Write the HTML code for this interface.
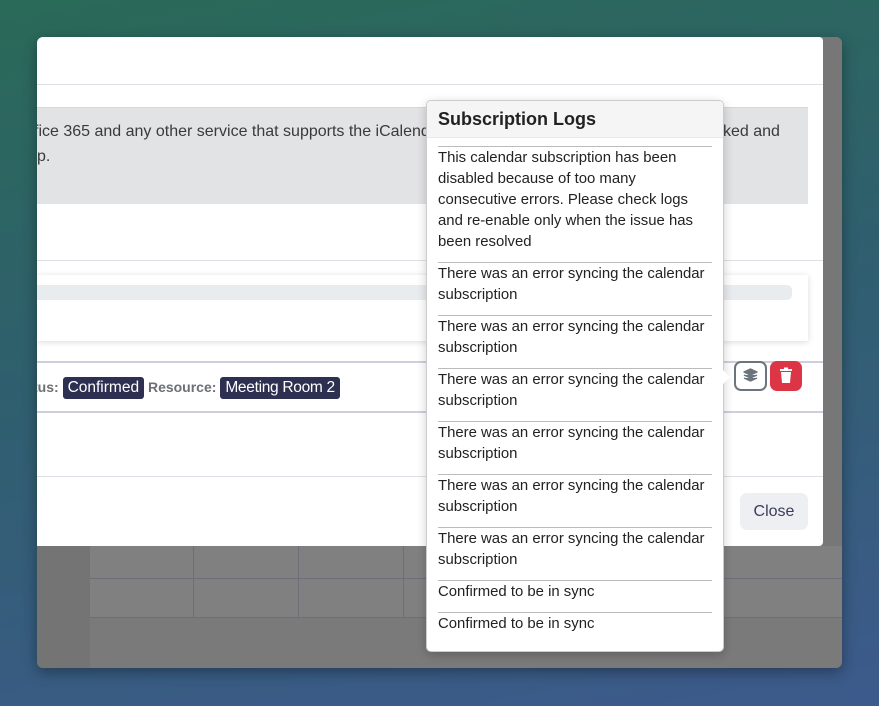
<!DOCTYPE html>
<html><head><style>
*{margin:0;padding:0;box-sizing:border-box}
body{width:879px;height:706px;overflow:hidden;font-family:"Liberation Sans",sans-serif;background:linear-gradient(170deg,#2a6a58 0%,#2f5f6e 45%,#3d5a8c 100%);position:relative}
.a{position:absolute}
.frame{left:37px;top:37px;width:805px;height:631px;background:#7a7a7a;border-radius:6px;overflow:hidden;box-shadow:0 4px 14px rgba(0,0,0,.35)}
.modal{left:0;top:0;width:786px;height:509px;background:#fff;border-radius:0 4px 4px 0}
.hl{height:1px;background:#dee0e6}
.t{font-size:16px;color:#3a3a3a;line-height:25px;white-space:nowrap}
.pop{left:426px;top:100px;width:298px;height:552px;background:#fff;border:1px solid #ccc;border-radius:5px;box-shadow:0 3px 10px rgba(0,0,0,.2)}
.ph{height:37px;background:#f5f5f5;font-weight:bold;font-size:18px;color:#222;padding:8px 11px;border-bottom:1px solid #e8e8e8;border-radius:5px 5px 0 0}
.it{margin:0 11px;border-top:1px solid #bbb;font-size:14.9px;line-height:21px;color:#222;padding-top:1px;padding-bottom:9px;white-space:nowrap}
.badge{background:#2e3052;color:#fff;border-radius:3px;padding:0 5px;font-size:15.5px;line-height:22px;display:inline-block}
</style></head><body>
<div class="a frame">
  <div class="a" style="left:0;top:509px;width:53px;height:122px;background:#747474"></div>
  <div class="a" style="left:53px;top:509px;width:752px;height:72px;background:#808080"></div>
  <div class="a" style="left:53px;top:541px;width:752px;height:1px;background:#6e6e78"></div>
  <div class="a" style="left:53px;top:580px;width:752px;height:1px;background:#6e6e78"></div>
  <div class="a" style="left:156px;top:509px;width:1px;height:72px;background:#6e6e78"></div>
  <div class="a" style="left:261px;top:509px;width:1px;height:72px;background:#6e6e78"></div>
  <div class="a" style="left:366px;top:509px;width:1px;height:72px;background:#6e6e78"></div>
  <div class="a" style="left:786px;top:0;width:19px;height:509px;background:#777"></div>
  <div class="a modal">
    <div class="a hl" style="left:0;top:47px;width:786px"></div>
    <div class="a" style="left:0;top:70px;width:771px;height:97px;background:#e2e3e5;border-top:1px solid #d6d7da"></div>
    <div class="a t" style="left:-3px;top:82px">fice 365 and any other service that supports the iCalendar format. Events</div>
    <div class="a t" style="left:686px;top:82px">ked and</div>
    <div class="a t" style="left:0;top:107px">p.</div>
    <div class="a hl" style="left:0;top:223px;width:786px"></div>
    <div class="a" style="left:0;top:238px;width:771px;height:66px;background:#fff;box-shadow:0 1px 6px rgba(0,0,0,.15)"></div>
    <div class="a" style="left:0;top:248px;width:755px;height:15px;background:#e9ecef;border-radius:0 5px 5px 0"></div>
    <div class="a" style="left:0;top:324px;width:786px;height:2px;background:#cdd0dc"></div>
    <div class="a" style="left:0;top:374px;width:786px;height:2px;background:#cdd0dc"></div>
    <div class="a" style="left:-4px;top:339px;font-size:14px;color:#6c6f73;font-weight:bold;white-space:nowrap;line-height:22px">tus: <span class="badge" style="font-weight:normal">Confirmed</span> Resource: <span class="badge" style="font-weight:normal;letter-spacing:-0.3px">Meeting Room 2</span></div>
    <div class="a" style="left:697px;top:324px;width:33px;height:30px;border:2px solid #6c757d;border-radius:7px"><svg width="29" height="26" viewBox="0 0 29 26"><path d="M14.5 6 L21 9 L14.5 12 L8 9Z M8 12 L14.5 15 L21 12 M8 15 L14.5 18 L21 15" fill="#6c757d" stroke="#6c757d" stroke-width="1.5" stroke-linejoin="round"/></svg></div>
    <div class="a" style="left:733px;top:324px;width:32px;height:30px;background:#dc3545;border-radius:7px"><svg width="32" height="30" viewBox="0 0 32 30"><rect x="10" y="8" width="12" height="2" fill="#fff"/><rect x="14" y="6.5" width="4" height="2" fill="#fff"/><path d="M11 11 H21 L20 22 H12Z" fill="#fff"/></svg></div>
    <div class="a hl" style="left:0;top:439px;width:786px"></div>
    <div class="a" style="left:703px;top:456px;width:68px;height:37px;background:#eeeff3;border-radius:7px;color:#3a3d5c;font-size:16px;text-align:center;line-height:37px">Close</div>
  </div>
</div>
<div class="a pop">
  <div class="ph">Subscription Logs</div>
  <div style="height:8px"></div>
  <div class="it">This calendar subscription has been<br>disabled because of too many<br>consecutive errors. Please check logs<br>and re-enable only when the issue has<br>been resolved</div>
  <div class="it">There was an error syncing the calendar<br>subscription</div>
  <div class="it">There was an error syncing the calendar<br>subscription</div>
  <div class="it">There was an error syncing the calendar<br>subscription</div>
  <div class="it">There was an error syncing the calendar<br>subscription</div>
  <div class="it">There was an error syncing the calendar<br>subscription</div>
  <div class="it">There was an error syncing the calendar<br>subscription</div>
  <div class="it">Confirmed to be in sync</div>
  <div class="it">Confirmed to be in sync</div>
</div>
<div class="a" style="left:723px;top:370px;width:0;height:0;border-top:7px solid transparent;border-bottom:7px solid transparent;border-left:7px solid #fff"></div>
</body></html>
